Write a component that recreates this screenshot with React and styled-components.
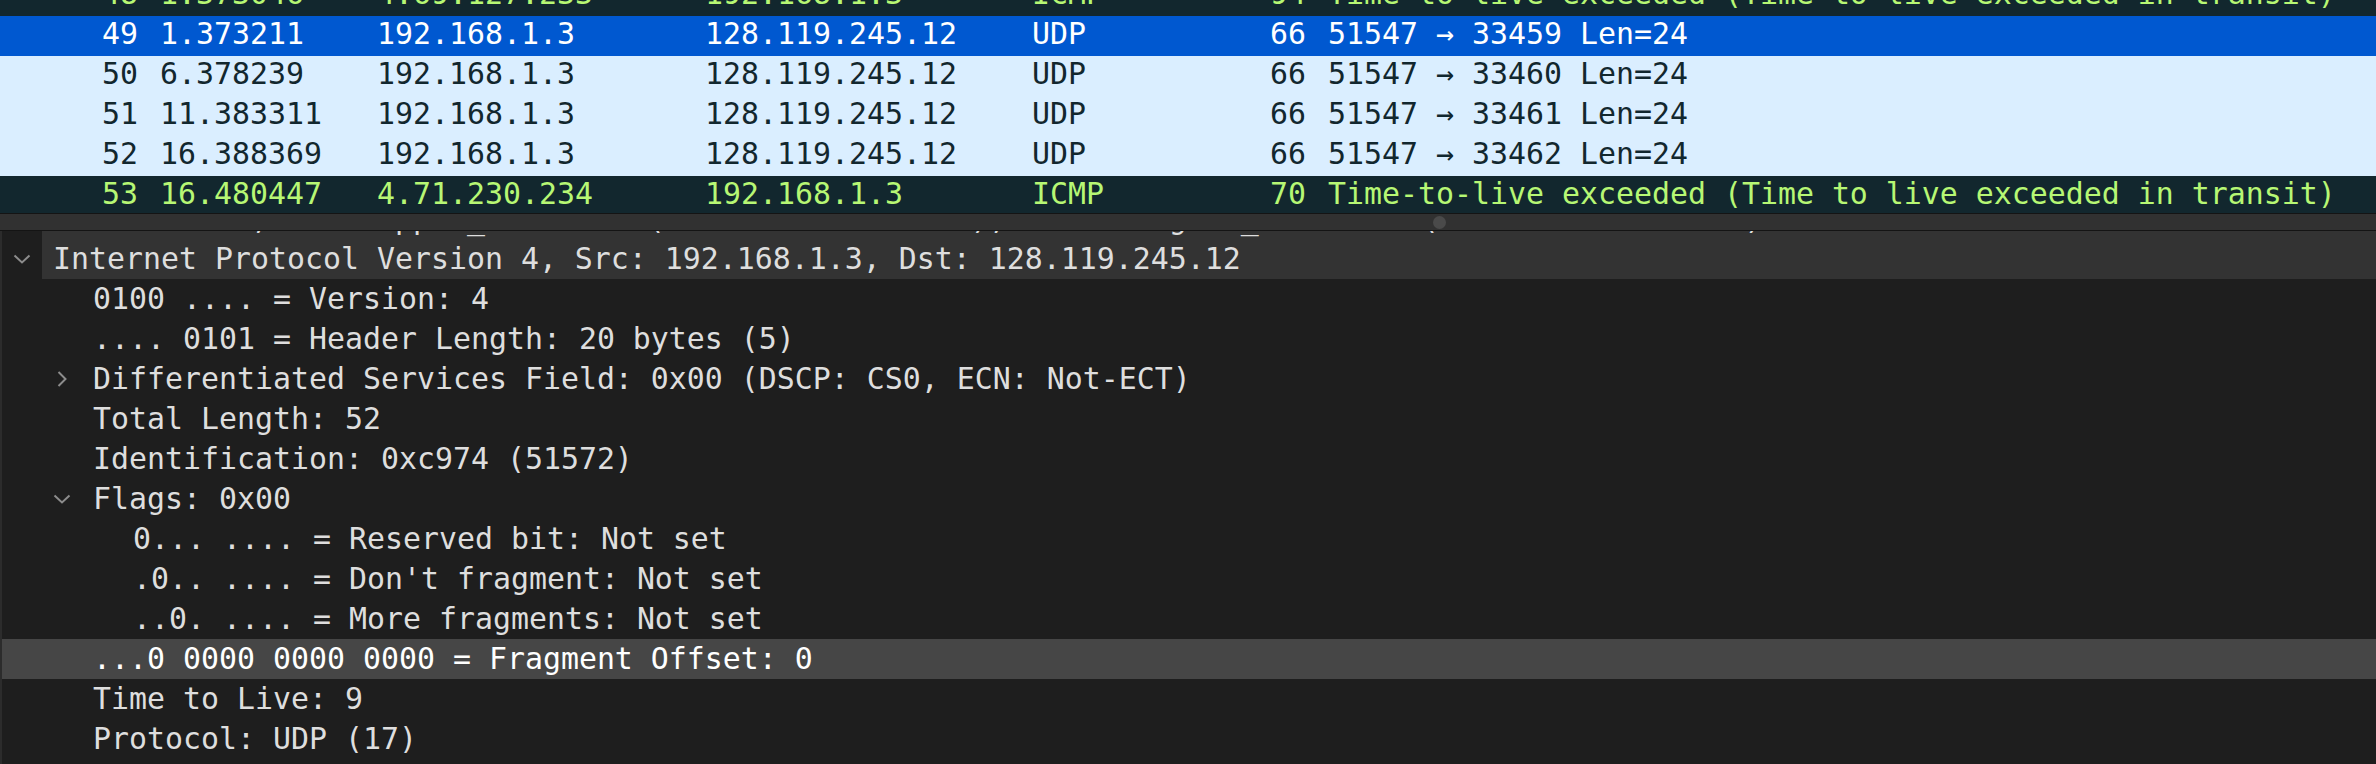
import React from "react";
import styled, { createGlobalStyle } from "styled-components";

const GlobalStyle = createGlobalStyle`
  html, body {
    margin: 0;
    padding: 0;
    background: #1e1e1e;
    overflow: hidden;
  }
`;

const packets = [
  { no: 48, time: "1.373046", src: "4.69.127.233", dst: "192.168.1.3", proto: "ICMP", len: 94, info: "Time-to-live exceeded (Time to live exceeded in transit)", kind: "icmp" },
  { no: 49, time: "1.373211", src: "192.168.1.3", dst: "128.119.245.12", proto: "UDP", len: 66, info: "51547 → 33459 Len=24", kind: "selected" },
  { no: 50, time: "6.378239", src: "192.168.1.3", dst: "128.119.245.12", proto: "UDP", len: 66, info: "51547 → 33460 Len=24", kind: "udp" },
  { no: 51, time: "11.383311", src: "192.168.1.3", dst: "128.119.245.12", proto: "UDP", len: 66, info: "51547 → 33461 Len=24", kind: "udp" },
  { no: 52, time: "16.388369", src: "192.168.1.3", dst: "128.119.245.12", proto: "UDP", len: 66, info: "51547 → 33462 Len=24", kind: "udp" },
  { no: 53, time: "16.480447", src: "4.71.230.234", dst: "192.168.1.3", proto: "ICMP", len: 70, info: "Time-to-live exceeded (Time to live exceeded in transit)", kind: "icmp" },
];

const details = [
  { level: 0, text: "Ethernet II, Src: Apple_5c:1d:e2 (f0:18:98:5c:1d:e2), Dst: Netgear_3a:90:1b (a0:04:60:3a:90:1b)", hover: true },
  { level: 0, text: "Internet Protocol Version 4, Src: 192.168.1.3, Dst: 128.119.245.12", open: true, hover: true },
  { level: 1, text: "0100 .... = Version: 4" },
  { level: 1, text: ".... 0101 = Header Length: 20 bytes (5)" },
  { level: 1, text: "Differentiated Services Field: 0x00 (DSCP: CS0, ECN: Not-ECT)", open: false },
  { level: 1, text: "Total Length: 52" },
  { level: 1, text: "Identification: 0xc974 (51572)" },
  { level: 1, text: "Flags: 0x00", open: true },
  { level: 2, text: "0... .... = Reserved bit: Not set" },
  { level: 2, text: ".0.. .... = Don't fragment: Not set" },
  { level: 2, text: "..0. .... = More fragments: Not set" },
  { level: 1, text: "...0 0000 0000 0000 = Fragment Offset: 0", selected: true },
  { level: 1, text: "Time to Live: 9" },
  { level: 1, text: "Protocol: UDP (17)" },
  { level: 1, text: "Header Checksum: 0x0000 [validation disabled]" },
];

const rowColors = {
  icmp: { bg: "#12272e", fg: "#b7f774" },
  udp: { bg: "#daeeff", fg: "#12272e" },
  selected: { bg: "#0058d0", fg: "#ffffff" },
};

const Window = styled.div`
  width: 2376px;
  height: 764px;
  display: flex;
  flex-direction: column;
  overflow: hidden;
  font-family: "DejaVu Sans Mono", "Liberation Mono", monospace;
  font-size: 29.9px;
`;

const PacketList = styled.div`
  height: 213px;
  flex-shrink: 0;
  overflow: hidden;
  background: #1e1e1e;
  border-bottom: 1px solid #141414;
`;

const ListBody = styled.div`
  margin-top: -24px;
`;

const PacketRow = styled.div`
  display: grid;
  grid-template-columns: 149px 217px 328px 327px 179px 117px 1fr;
  align-items: start;
  height: 40px;
  line-height: 36px;
  white-space: pre;
  background: ${(p) => rowColors[p.$kind].bg};
  color: ${(p) => rowColors[p.$kind].fg};
`;

const Cell = styled.div`
  padding: 0 11px;
  overflow: hidden;
  text-align: ${(p) => (p.$right ? "right" : "left")};
`;

const Splitter = styled.div`
  height: 16px;
  flex-shrink: 0;
  display: flex;
  align-items: center;
  padding-left: 1433px;
  background: #313131;
  border-bottom: 1px solid #141414;
`;

const Grip = styled.span`
  width: 13px;
  height: 13px;
  border-radius: 50%;
  background: #4a4a4a;
`;

const DetailPane = styled.div`
  flex: 1;
  overflow: hidden;
  background: #1e1e1e;
  border-left: 2px solid #2c2c2c;
`;

const Tree = styled.div`
  margin-top: -32px;
`;

const TreeRow = styled.div`
  display: flex;
  height: 40px;
  line-height: 40px;
  white-space: pre;
  padding-left: ${(p) => p.$level * 40}px;
  background: ${(p) => (p.$selected ? "#464646" : "transparent")};
  color: ${(p) => (p.$selected ? "#ffffff" : "#dedede")};
`;

const Branch = styled.span`
  width: 40px;
  flex-shrink: 0;
  display: flex;
  align-items: center;
  justify-content: center;
  color: #8c8c8c;
`;

const Label = styled.span`
  flex: 1;
  padding-left: 11px;
  background: ${(p) => (p.$hover ? "#333333" : "transparent")};
`;

const Chevron = ({ open }) =>
  open ? (
    <svg width="18" height="10" viewBox="0 0 18 10">
      <path d="M1.5 1.5 L9 8.5 L16.5 1.5" fill="none" stroke="currentColor" strokeWidth="2" />
    </svg>
  ) : (
    <svg width="10" height="16" viewBox="0 0 10 16">
      <path d="M1.5 1 L8.5 8 L1.5 15" fill="none" stroke="currentColor" strokeWidth="2" />
    </svg>
  );

export default function App() {
  return (
    <Window>
      <GlobalStyle />
      <PacketList>
        <ListBody>
          {packets.map((p) => (
            <PacketRow key={p.no} $kind={p.kind}>
              <Cell $right>{p.no}</Cell>
              <Cell>{p.time}</Cell>
              <Cell>{p.src}</Cell>
              <Cell>{p.dst}</Cell>
              <Cell>{p.proto}</Cell>
              <Cell $right>{p.len}</Cell>
              <Cell>{p.info}</Cell>
            </PacketRow>
          ))}
        </ListBody>
      </PacketList>
      <Splitter>
        <Grip />
      </Splitter>
      <DetailPane>
        <Tree>
          {details.map((d, i) => (
            <TreeRow key={i} $level={d.level} $selected={d.selected}>
              <Branch>{d.open !== undefined && <Chevron open={d.open} />}</Branch>
              <Label $hover={d.hover}>{d.text}</Label>
            </TreeRow>
          ))}
        </Tree>
      </DetailPane>
    </Window>
  );
}
